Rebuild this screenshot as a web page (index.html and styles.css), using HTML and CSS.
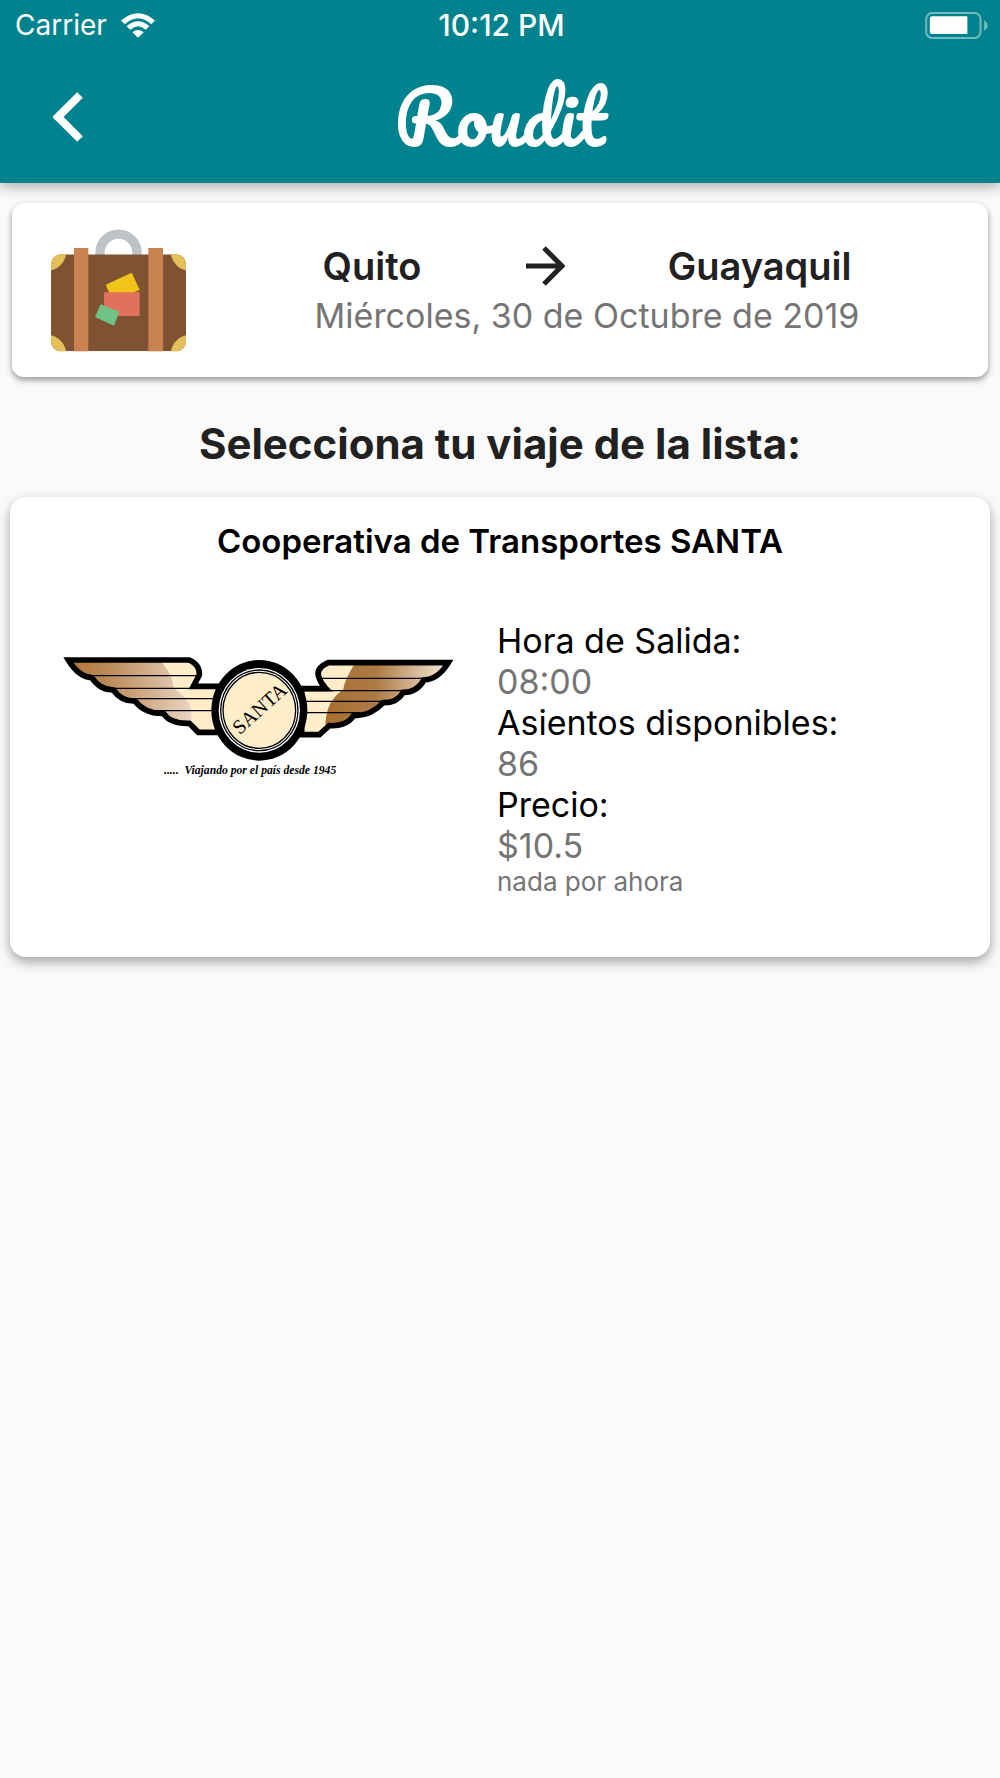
FILE: index.html
```
<!DOCTYPE html>
<html lang="es">
<head>
    <meta charset="UTF-8">
    <meta name="viewport" content="width=device-width, initial-scale=1.0">
    <title>Roudit</title>
    <link rel="stylesheet" href="styles.css">
</head>
<body>
    <header class="app-header">
        <div class="status-bar">
            <div class="carrier">
                <span>Carrier</span>
                <svg class="wifi" viewBox="0 0 102 74" aria-hidden="true">
                    <path d="M0 22 Q51 -22 102 22 L91 33 Q51 -3 11 33 Z"/>
                    <path d="M17 39 Q51 9 85 39 L74 50 Q51 29 28 50 Z"/>
                    <path d="M34 57 Q51 44 68 57 L51 74 Z"/>
                </svg>
            </div>
            <span class="time">10:12 PM</span>
            <svg class="battery" viewBox="0 0 190 82" aria-hidden="true">
                <rect class="battery-case" x="3" y="3" width="165" height="76" rx="18"/>
                <path class="battery-tip" d="M179 26 Q189 30 189 41 Q189 52 179 56 Z"/>
                <path class="battery-level" d="M21 13 H128 V67 H21 Q14 67 14 60 V20 Q14 13 21 13 Z"/>
            </svg>
        </div>
        <nav class="toolbar">
            <button class="back-btn" type="button" aria-label="Volver">
                <svg viewBox="0 0 30 50" aria-hidden="true">
                    <path d="M27 3 L5 25 L27 47"/>
                </svg>
            </button>
            <div class="brand">Roudit</div>
        </nav>
    </header>

    <main>
        <section class="card trip-card">
            <svg class="suitcase" viewBox="0 0 405 369" aria-hidden="true">
                <defs>
                    <clipPath id="case"><rect y="76" width="405" height="291" rx="30"/></clipPath>
                </defs>
                <path d="M147 80 V71 A55 55 0 0 1 258 71 V80" fill="none" stroke="#bdc3c7" stroke-width="28"/>
                <g clip-path="url(#case)">
                    <rect y="76" width="405" height="291" fill="#7f5331"/>
                    <g fill="#e3c05c">
                        <circle cx="-14" cy="66" r="60"/>
                        <circle cx="419" cy="66" r="60"/>
                        <circle cx="-14" cy="377" r="60"/>
                        <circle cx="419" cy="377" r="60"/>
                    </g>
                </g>
                <path d="M69 57 h43 v310 h-43 Z M292 57 h44 v310 h-44 Z" fill="#cb8252"/>
                <path d="M164 167 L242 131 L266 182 L220 205 L175 192 Z" fill="#f0c419"/>
                <path d="M159 190 h107 v71 h-107 Z" fill="#e2705e"/>
                <path d="M149 226 L205 248 L189 290 L132 264 Z" fill="#71c386"/>
            </svg>
            <div class="trip-info">
                <div class="route">
                    <span>Quito</span>
                    <svg class="arrow" viewBox="0 0 40 42" aria-hidden="true">
                        <path d="M1 21 H36 M19 3 L37 21 L19 39"/>
                    </svg>
                    <span>Guayaquil</span>
                </div>
                <div class="date">Miércoles, 30 de Octubre de 2019</div>
            </div>
        </section>

        <h1 class="list-title">Selecciona tu viaje de la lista:</h1>

        <article class="card coop-card">
            <h2 class="coop-name">Cooperativa de Transportes SANTA</h2>
            <div class="coop-body">
                <svg class="coop-logo" viewBox="0 0 1260 450" role="img" aria-label="SANTA">
                    <defs>
                        <linearGradient id="wing-left">
                            <stop offset="0" stop-color="#ad7233"/>
                            <stop offset="0.35" stop-color="#bc8a58"/>
                            <stop offset="1" stop-color="#ead5c3"/>
                        </linearGradient>
                        <linearGradient id="wing-right">
                            <stop offset="0" stop-color="#a66e2f"/>
                            <stop offset="0.4" stop-color="#ad7b45"/>
                            <stop offset="1" stop-color="#fff3e5"/>
                        </linearGradient>
                        <clipPath id="left"><path d="M55 60 H418 Q450 75 448 105 L430 139 H510 V277 H445 L418 250 Q360 252 340 220 Q285 222 255 183 Q215 185 190 150 Q150 150 125 113 Q85 110 55 60 Z"/></clipPath>
                        <clipPath id="right"><path d="M1195 68 H835 Q797 85 806 110 Q812 130 828 146 H755 V284 H808 L838 257 Q890 260 912 226 Q960 230 1000 188 Q1040 190 1060 157 Q1100 158 1122 120 Q1165 118 1195 68 Z"/></clipPath>
                    </defs>

                    <!-- ala izquierda -->
                    <g clip-path="url(#left)">
                        <rect x="40" y="50" width="480" height="240" fill="#ffeec9"/>
                        <path d="M40 50 H318 C350 80 366 105 372 145 C400 165 426 190 424 220 V290 H40 Z" fill="url(#wing-left)"/>
                        <path class="feather" d="M100 107 H450 M170 145 H510 M220 176 H510 M290 212 H510"/>
                    </g>
                    <path class="wing-edge" d="M55 60 H418 Q450 75 448 105 L430 139 H510 V277 H445 L418 250 Q360 252 340 220 Q285 222 255 183 Q215 185 190 150 Q150 150 125 113 Q85 110 55 60 Z"/>

                    <!-- ala derecha -->
                    <g clip-path="url(#right)">
                        <rect x="740" y="50" width="470" height="245" fill="#ffeec9"/>
                        <path d="M925 50 C905 90 885 115 880 148 C840 180 824 205 826 290 H1210 V50 Z" fill="url(#wing-right)"/>
                        <path class="feather" d="M800 115 H1140 M755 152 H1080 M755 184 H1020 M755 218 H930"/>
                    </g>
                    <path class="wing-edge" d="M1195 68 H835 Q797 85 806 110 Q812 130 828 146 H755 V284 H808 L838 257 Q890 260 912 226 Q960 230 1000 188 Q1040 190 1060 157 Q1100 158 1122 120 Q1165 118 1195 68 Z"/>

                    <ellipse cx="628" cy="211" rx="144" ry="151"/>
                    <ellipse cx="628" cy="211" rx="122" ry="127" fill="#fff"/>
                    <ellipse cx="628" cy="211" rx="116" ry="121" fill="#fff" stroke="#000" stroke-width="4"/>
                    <ellipse cx="628" cy="211" rx="109" ry="114" fill="#ffeec9" stroke="#000" stroke-width="4"/>
                    <text class="logo-name" x="628" y="226" transform="rotate(-42 628 205)">SANTA</text>
                    <text class="logo-motto" x="342" y="402">..... &#160;Viajando por el país desde 1945</text>
                </svg>
                <div class="details">
                    <dl>
                        <dt>Hora de Salida:</dt>
                        <dd>08:00</dd>
                        <dt>Asientos disponibles:</dt>
                        <dd>86</dd>
                        <dt>Precio:</dt>
                        <dd>$10.5</dd>
                    </dl>
                    <p class="note">nada por ahora</p>
                </div>
            </div>
        </article>
    </main>
</body>
</html>
```
FILE: styles.css
```
* {
    box-sizing: border-box;
}

body {
    margin: 0;
    min-height: 100vh;
    background: #fafafa;
    color: #212121;
    font-family: Inter, "Liberation Sans", sans-serif;
}

h1, h2, p, dl, dd {
    margin: 0;
}

/* Cabecera */
.app-header {
    position: relative;
    background: #00838f;
    color: #fff;
    box-shadow: 0 4px 12px rgba(0, 0, 0, 0.3);
}

.status-bar {
    display: grid;
    grid-template-columns: 1fr auto 1fr;
    align-items: center;
    height: 50px;
    padding: 0 12px 0 15px;
    font-size: 28px;
    line-height: 32px;
}

.carrier {
    display: flex;
    align-items: center;
    gap: 14px;
}

.wifi {
    width: 34px;
    height: 25px;
    fill: #fff;
}

.time {
    font-size: 30px;
    font-weight: 500;
}

.battery {
    width: 63px;
    height: 27px;
    justify-self: end;
}

.battery-case {
    fill: none;
    stroke: #72bbc1;
    stroke-width: 6;
}

.battery-tip {
    fill: #72bbc1;
}

.battery-level {
    fill: #fff;
}

.toolbar {
    display: grid;
    grid-template-columns: 1fr auto 1fr;
    align-items: center;
    height: 133px;
}

.back-btn {
    display: flex;
    justify-self: start;
    margin-left: 33px;
    padding: 20px;
    background: none;
    border: none;
    cursor: pointer;
}

.back-btn svg {
    width: 30px;
    height: 50px;
    fill: none;
    stroke: #fff;
    stroke-width: 8;
}

.brand {
    font-family: Pacifico, Lato, cursive;
    font-size: 72px;
    line-height: 80px;
}

/* Tarjetas */
.card {
    background: #fff;
}

.trip-card {
    display: flex;
    align-items: center;
    margin: 20px 12px 0;
    padding: 26px 0 25px 39px;
    border-radius: 12px;
    box-shadow: 0 3px 6px rgba(0, 0, 0, 0.4);
}

.suitcase {
    flex: none;
    width: 135px;
    height: 123px;
}

.trip-info {
    margin: 0 auto;
}

.route {
    display: flex;
    justify-content: space-between;
    align-items: center;
    padding: 0 8px;
    font-size: 38px;
    line-height: 50px;
    font-weight: 600;
}

.arrow {
    width: 40px;
    height: 42px;
    fill: none;
    stroke: #212121;
    stroke-width: 5;
}

.date {
    color: #757575;
    font-size: 34px;
    line-height: 50px;
}

.list-title {
    margin: 42px 16px 28px;
    font-size: 42px;
    line-height: 50px;
    font-weight: 700;
    text-align: center;
}

.coop-card {
    margin: 0 10px;
    padding: 24px 0 59px;
    border-radius: 16px;
    box-shadow: 0 5px 12px rgba(0, 0, 0, 0.35);
}

.coop-name {
    color: #000;
    font-size: 33px;
    line-height: 41px;
    font-weight: 600;
    text-align: center;
}

.coop-body {
    display: grid;
    grid-template-columns: 1fr 1fr;
    gap: 27px;
    padding: 58px 73px 0 40px;
}

.coop-logo {
    width: 100%;
    margin-top: 20px;
}

.feather {
    fill: none;
    stroke: #000;
    stroke-width: 4;
}

.wing-edge {
    fill: none;
    stroke: #000;
    stroke-width: 17;
}

.logo-name {
    font-family: "Liberation Serif", serif;
    font-size: 60px;
    text-anchor: middle;
}

.logo-motto {
    font-family: "Liberation Serif", serif;
    font-size: 35px;
    font-weight: bold;
    font-style: italic;
}

.details {
    font-size: 34px;
    line-height: 41px;
}

.details dt {
    color: #000;
}

.details dd,
.note {
    color: #757575;
}

.note {
    font-size: 26px;
    line-height: 32px;
}
```
